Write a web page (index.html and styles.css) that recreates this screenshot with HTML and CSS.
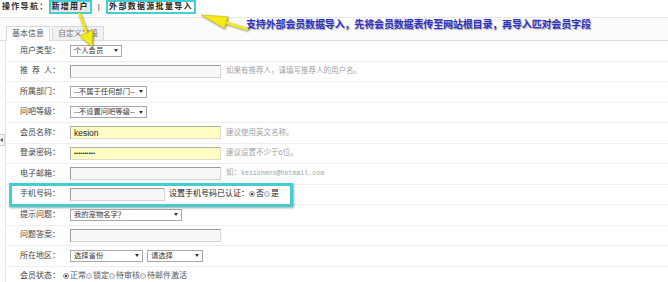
FILE: index.html
```html
<!DOCTYPE html>
<html lang="zh-CN">
<head>
    <meta charset="UTF-8">
    <title>新增用户</title>
    <link rel="stylesheet" href="styles.css">
</head>
<body>
    <div class="nav">
        操作导航：<a class="nav-link current" href="#">新增用户</a><span class="sep">|</span><a class="nav-link" href="#">外部数据源批量导入</a>
    </div>
    <div class="panel">
        <div class="tabs">
            <span class="tab active">基本信息</span>
            <span class="tab">自定义字段</span>
        </div>
        <div class="form">
            <div class="row">
                <span class="label">用户类型：</span>
                <div class="select w52">个人会员<i class="caret"></i></div>
            </div>
            <div class="row">
                <span class="label"><span class="spread">推荐</span>人：</span>
                <input class="input" type="text">
                <span class="hint">如果有推荐人，请填写推荐人的用户名。</span>
            </div>
            <div class="row">
                <span class="label">所属部门：</span>
                <div class="select w77">--不属于任何部门--<i class="caret"></i></div>
            </div>
            <div class="row">
                <span class="label">问吧等级：</span>
                <div class="select w77">--不设置问吧等级--<i class="caret"></i></div>
            </div>
            <div class="row">
                <span class="label">会员名称：</span>
                <input class="input req" type="text" value="kesion">
                <span class="hint">建议使用英文名称。</span>
            </div>
            <div class="row">
                <span class="label">登录密码：</span>
                <input class="input req pass" type="password" value="1234567890">
                <span class="hint">建议设置不少于6位。</span>
            </div>
            <div class="row">
                <span class="label">电子邮箱：</span>
                <input class="input" type="text">
                <span class="hint">如：<span class="mono">kesionmns@hotmail.com</span></span>
            </div>
            <div class="row">
                <span class="label">手机号码：</span>
                <input class="input short" type="text">
                <span class="verify">设置手机号码已认证：</span>
                <label class="opt"><input type="radio" name="verified" checked>否</label>
                <label class="opt"><input type="radio" name="verified">是</label>
            </div>
            <div class="row">
                <span class="label">提示问题：</span>
                <div class="select w112">我的宠物名字？<i class="caret"></i></div>
            </div>
            <div class="row">
                <span class="label">问题答案：</span>
                <input class="input" type="text">
            </div>
            <div class="row">
                <span class="label">所在地区：</span>
                <div class="select w73">选择省份<i class="caret"></i></div>
                <div class="select w56 next">请选择<i class="caret"></i></div>
            </div>
            <div class="row">
                <span class="label">会员状态：</span>
                <label class="opt"><input type="radio" name="status" checked>正常</label>
                <label class="opt"><input type="radio" name="status">锁定</label>
                <label class="opt"><input type="radio" name="status">待审核</label>
                <label class="opt"><input type="radio" name="status">待邮件激活</label>
            </div>
        </div>
    </div>

    <span class="side-toggle"></span>
    <div class="note">支持外部会员数据导入，先将会员数据表传至网站根目录，再导入匹对会员字段</div>
    <div class="callout"></div>
    <svg class="arrows" width="668" height="60" viewBox="0 0 668 60">
        <g class="arrow">
            <line x1="79" y1="13" x2="86.5" y2="33"/>
            <polygon points="92,47 79.8,35.8 92.8,30.4"/>
        </g>
        <g class="arrow">
            <line x1="248" y1="29.5" x2="224" y2="22"/>
            <polygon points="201,15 227.7,16.8 224.3,28.2"/>
        </g>
    </svg>
</body>
</html>
```

FILE: styles.css
```css
body {
    margin: 0;
    height: 282px;
    overflow: hidden;
    position: relative;
    background: #fff;
    font-family: "Liberation Sans", "Noto Sans CJK SC", sans-serif;
    font-size: 8px;
    line-height: 10px;
    color: #444;
}
.nav {
    display: flex;
    align-items: flex-start;
    height: 17px;
    padding-left: 2px;
    line-height: 14px;
    font-weight: bold;
    color: #333;
    letter-spacing: 1.3px;
}
.nav-link {
    border: 2px solid #43cfd3;
    padding: 0 1px;
    line-height: 10px;
    color: #222;
    text-decoration: none;
}
.nav-link.current {
    background: #e8e8e8;
}
.sep {
    margin: 0 5px 0 6px;
    font-weight: normal;
}
.panel {
    border-top: 1px solid #e8e8e8;
}
.tabs {
    display: flex;
    align-items: flex-end;
    gap: 2px;
    height: 22px;
    padding-left: 6px;
    background: #fbfbfb;
    border-bottom: 1px solid #dcdcdc;
}
.tab {
    height: 13px;
    line-height: 13px;
    padding: 0 5px;
    border: 1px solid #d8d8d8;
    border-bottom: none;
    background: #f1f1f1;
    color: #777;
}
.tab.active {
    height: 14px;
    margin-bottom: -1px;
    background: #fff;
    color: #555;
}
.form {
    margin-left: 5px;
    border-left: 1px solid #e6e6e6;
}
.row {
    display: flex;
    align-items: center;
    height: 19.5px;
    border-bottom: 1px solid #eee;
    white-space: nowrap;
}
.label {
    flex: none;
    width: 43px;
    padding-left: 14px;
}
.spread {
    letter-spacing: 4px;
}
.input {
    box-sizing: border-box;
    width: 151px;
    height: 13px;
    margin: 0 0 0 7px;
    padding: 0 3px;
    border: 1px solid;
    border-color: #9c9c9c #d6d6d6 #d6d6d6 #9c9c9c;
    background: #f8f8f8;
    font-family: "Liberation Sans", sans-serif;
    font-size: 8.5px;
    color: #222;
    outline: none;
}
.input.req {
    background: #ffffc4;
    border-color: #b0b0a0 #dcdcc8 #dcdcc8 #b0b0a0;
}
.input.pass {
    font-size: 6px;
}
.input.short {
    width: 95px;
}
.hint {
    margin-left: 5px;
    font-size: 7.5px;
    color: #a2a2a2;
}
.mono {
    font-family: "Liberation Mono", monospace;
    font-size: 6.6px;
}
.verify {
    margin-left: 4px;
    color: #222;
}
.select {
    box-sizing: border-box;
    display: flex;
    align-items: center;
    height: 12px;
    margin-left: 7px;
    padding: 0 3px;
    border: 1px solid #a8a8a8;
    background: #fff;
    font-size: 7.3px;
    color: #333;
}
.select.next {
    margin-left: 4px;
}
.w52 { width: 52px; }
.w56 { width: 56px; }
.w73 { width: 73px; }
.w77 { width: 77px; }
.w112 { width: 112px; }
.caret {
    flex: none;
    margin-left: auto;
    border-left: 2px solid transparent;
    border-right: 2px solid transparent;
    border-top: 3px solid #333;
}
.opt {
    display: inline-flex;
    align-items: center;
    color: #555;
}
.verify + .opt, .verify + .opt + .opt {
    color: #222;
}
.opt input {
    appearance: none;
    -webkit-appearance: none;
    box-sizing: border-box;
    width: 6px;
    height: 6px;
    margin: 0 1px 0 0;
    border: 1px solid #b4b4b4;
    border-radius: 50%;
    background: #e8e8e8;
}
.opt input:checked {
    background: radial-gradient(circle, #444 0 1.3px, #f4f4f4 1.6px);
    border-color: #999;
}
.side-toggle {
    position: absolute;
    left: 0;
    top: 134px;
    width: 4px;
    height: 10px;
    background: #f4f4f4;
    border: 1px solid #d0d0d0;
    border-left: none;
}
.side-toggle::before {
    content: "";
    position: absolute;
    left: 0;
    top: 3px;
    border-top: 2px solid transparent;
    border-bottom: 2px solid transparent;
    border-right: 3px solid #556;
}
.note {
    position: absolute;
    left: 246px;
    top: 19px;
    font-size: 10px;
    line-height: 12px;
    font-weight: bold;
    letter-spacing: -0.15px;
    color: #2f32c8;
    text-shadow: 1px 1px 1px rgba(0, 0, 0, 0.35);
    white-space: nowrap;
}
.callout {
    position: absolute;
    left: 9px;
    top: 183px;
    width: 284px;
    height: 24px;
    box-sizing: border-box;
    border: 3px solid #45cbd0;
    box-shadow: 1px 1px 2px rgba(0, 0, 0, 0.35);
}
.arrows {
    position: absolute;
    left: 0;
    top: 0;
    pointer-events: none;
    filter: drop-shadow(1px 1px 1px rgba(60, 60, 0, 0.55));
}
.arrow line {
    stroke: #f3ea1c;
    stroke-width: 2.5;
}
.arrow polygon {
    fill: #f3ea1c;
    stroke: #c9c010;
    stroke-width: 0.6;
}
```
